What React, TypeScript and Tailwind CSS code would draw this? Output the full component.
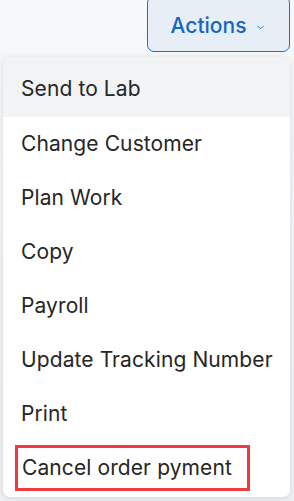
import { ChevronDown } from 'lucide-react';

const items = [
  'Send to Lab',
  'Change Customer',
  'Plan Work',
  'Copy',
  'Payroll',
  'Update Tracking Number',
  'Print',
  'Cancel order pyment',
];

export default function App() {
  return (
    <div
      className="relative w-[294px] h-[501px] overflow-hidden bg-gradient-to-b from-[#f7f8fa] to-[#eef0f3]"
      style={{ fontFamily: 'Inter, "Noto Sans", sans-serif' }}
    >
      <div className="flex justify-end pr-[4px]">
        <button className="mt-[-4px] h-[56px] w-[143px] flex items-center justify-center gap-[9px] rounded-[7px] border border-[#1f6fc5] bg-[#e8eef6] text-[#1466c4] text-[21px] font-medium pt-[4px]">
          Actions
          <ChevronDown className="w-[11px] h-[11px] mt-[3px]" strokeWidth={2} />
        </button>
      </div>

      {/* dropdown menu */}
      <div className="absolute left-[3px] top-[57px] w-[287px] h-[440px] rounded-[7px] bg-white shadow-[0_1px_6px_rgba(0,0,0,0.12)] overflow-hidden">
        {items.map((label, i) => {
          const first = i === 0;
          const last = i === items.length - 1;
          return (
            <div
              key={label}
              className={`flex items-center text-[21px] text-[#262626] tracking-[0.1px] ${
                first ? 'h-[60px] pt-[4px] bg-[#f2f3f5]' : 'h-[54px]'
              }`}
            >
              {last ? (
                <span className="ml-[12px] h-[46px] w-[235px] flex items-center pl-[4px] border-[3px] border-[#ef3b40]">
                  {label}
                </span>
              ) : (
                <span className="ml-[18px]">{label}</span>
              )}
            </div>
          );
        })}
      </div>
    </div>
  );
}
